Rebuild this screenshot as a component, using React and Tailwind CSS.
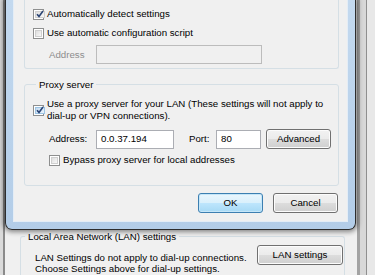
import React from 'react';

const font = { fontFamily: '"Liberation Sans", Arial, sans-serif' };

function Check({ checked, hot }) {
    return (
        <span className="w-[11px] h-[11px] shrink-0 border border-[#8e8f8f] bg-white p-[1px] flex">
            <span className={`flex-1 flex items-center justify-center border ${hot ? 'border-[#9cc4e4] bg-linear-to-br from-[#c6dcf1] to-[#eaf3fb]' : 'border-[#cfcfcf] bg-linear-to-br from-[#dedede] to-[#f8f8f8]'}`}>
                {checked && (
                    <svg width="8" height="8" viewBox="0 0 8 8">
                        <path d="M1 4.2 L3 6.4 L7 1" fill="none" stroke="#2b4474" strokeWidth="1.6" />
                    </svg>
                )}
            </span>
        </span>
    );
}

function Button({ children, def, className = '' }) {
    return (
        <div className={`h-[20px] rounded-[3px] border flex items-center justify-center ${def
            ? 'border-[#3c7fb1] bg-[linear-gradient(#eaf6fd_0%,#d9f0fc_50%,#bee6fd_50%,#a7d9f5_100%)] shadow-[inset_0_0_0_1px_#c5e6f8]'
            : 'border-[#707070] bg-[linear-gradient(#f2f2f2_0%,#ebebeb_50%,#dddddd_50%,#cfcfcf_100%)] shadow-[inset_0_0_0_1px_#fcfcfc]'} ${className}`}>
            {children}
        </div>
    );
}

export default function App() {
    return (
        <div className="relative w-[375px] h-[275px] overflow-hidden text-[9.7px] text-black leading-[12px]" style={font}>
            {/* Background window: Internet Options */}
            <div className="flex h-full">
                <div className="w-[3px] bg-[#dadada]" />
                <div className="w-[2px] bg-[#8a8a8a]" />
                <div className="w-[352px] bg-[#f0f0f0] pt-[230px]">
                    <fieldset className="ml-[15px] mr-[12px] h-[60px] border border-b-0 border-[#d5dfe5] rounded-t-[3px]">
                        <legend className="ml-[4px] px-[3px] leading-[13px]">Local Area Network (LAN) settings</legend>
                        <div className="flex items-start justify-between pl-[14px] pr-[1px] pt-[2px]">
                            <p className="pt-[7px] leading-[11px]">
                                LAN Settings do not apply to dial-up connections.<br />
                                Choose Settings above for dial-up settings.
                            </p>
                            <Button className="w-[86px] h-[18px]">LAN settings</Button>
                        </div>
                    </fieldset>
                </div>
                <div className="w-[3px] bg-[#a3a3a3]" />
                <div className="w-[6px] bg-[#d8d8d8]" />
                <div className="w-[1px] bg-[#8f8f8f]" />
                <div className="flex-1 bg-[#e8e8e8]" />
            </div>

            {/* Foreground window: LAN Settings dialog */}
            <div className="absolute left-[5px] top-0 w-[351px] h-[230px] border border-t-0 border-[#2d2d2d] rounded-b-[7px] bg-linear-to-b from-[#c3d9ef] to-[#b3cde8] px-[7px] pb-[7px] shadow-[0_0_5px_2px_rgba(0,0,0,0.45)]">
                <div className="h-full border border-t-0 border-[#e4edf6] bg-[#f0f0f0] pl-[10px] pr-[8px]">
                    {/* Automatic configuration */}
                    <div className="h-[69px] border border-t-0 border-[#d5dfe5] rounded-b-[3px] pl-[8px] pt-[8px]">
                        <div className="h-[12px] flex items-center gap-[3px]">
                            <Check checked />
                            <span>Automatically detect settings</span>
                        </div>
                        <div className="h-[12px] mt-[7px] flex items-center gap-[3px]">
                            <Check />
                            <span>Use automatic configuration script</span>
                        </div>
                        <div className="h-[19px] mt-[6px] flex items-center pl-[16px]">
                            <span className="w-[47px] text-[#8d8d8d]">Address</span>
                            <div className="w-[166px] h-[19px] border border-[#bcbcbc] bg-[#f0f0f0]" />
                        </div>
                    </div>

                    {/* Proxy server */}
                    <fieldset className="mt-[9px] h-[108px] border border-[#d5dfe5] rounded-[3px] pl-[8px]">
                        <legend className="ml-[3px] px-[3px] leading-[13px]">Proxy server</legend>
                        <div className="mt-[7px] flex items-center gap-[3px]">
                            <Check checked hot />
                            <p className="leading-[12px]">
                                Use a proxy server for your LAN (These settings will not apply to<br />
                                dial-up or VPN connections).
                            </p>
                        </div>
                        <div className="h-[20px] mt-[7px] flex items-center pl-[16px]">
                            <span className="w-[47px]">Address:</span>
                            <div className="w-[78px] h-[19px] border border-[#abadb3] bg-white flex items-center pl-[4px]">0.0.37.194</div>
                            <span className="ml-[15px] w-[27px]">Port:</span>
                            <div className="w-[45px] h-[19px] border border-[#abadb3] bg-white flex items-center pl-[4px]">80</div>
                            <Button className="ml-[5px] w-[65px]">Advanced</Button>
                        </div>
                        <div className="h-[12px] mt-[5px] flex items-center gap-[3px] pl-[16px]">
                            <Check />
                            <span>Bypass proxy server for local addresses</span>
                        </div>
                    </fieldset>

                    {/* Dialog buttons */}
                    <div className="mt-[7px] flex justify-end gap-[10px] pr-[1px]">
                        <Button def className="w-[65px]">OK</Button>
                        <Button className="w-[65px]">Cancel</Button>
                    </div>
                </div>
            </div>
        </div>
    );
}
